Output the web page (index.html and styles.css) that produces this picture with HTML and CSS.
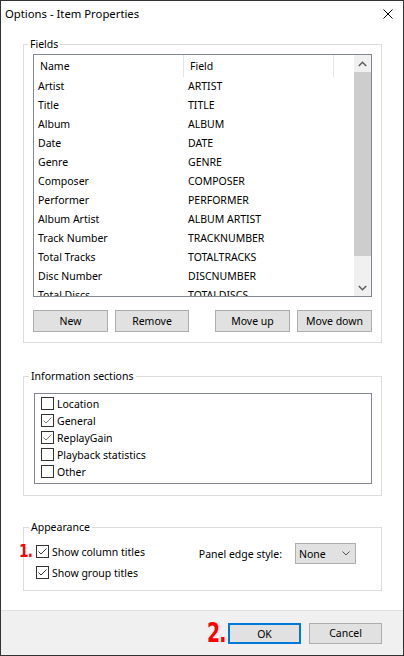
FILE: index.html
```html
<!DOCTYPE html>
<html>
<head>
<meta charset="utf-8">
<link rel="stylesheet" href="styles.css">
</head>
<body>
<div class="window">
  <div class="titlebar">
    <span class="title">Options - Item Properties</span>
    <svg class="close" width="10" height="10" viewBox="0 0 10 10"><path d="M0.5 0.5 L9.5 9.5 M9.5 0.5 L0.5 9.5" stroke="#000" stroke-width="1" fill="none"/></svg>
  </div>
  <div class="content">
    <fieldset class="group group-fields">
      <legend>Fields</legend>
      <div class="listview">
        <div class="lv-main">
          <div class="lv-header">
            <div class="hcell c1">Name</div>
            <div class="hcell c2">Field</div>
          </div>
          <div class="lv-rows">
            <div class="lv-row"><span class="cell c1">Artist</span><span class="cell c2">ARTIST</span></div>
            <div class="lv-row"><span class="cell c1">Title</span><span class="cell c2">TITLE</span></div>
            <div class="lv-row"><span class="cell c1">Album</span><span class="cell c2">ALBUM</span></div>
            <div class="lv-row"><span class="cell c1">Date</span><span class="cell c2">DATE</span></div>
            <div class="lv-row"><span class="cell c1">Genre</span><span class="cell c2">GENRE</span></div>
            <div class="lv-row"><span class="cell c1">Composer</span><span class="cell c2">COMPOSER</span></div>
            <div class="lv-row"><span class="cell c1">Performer</span><span class="cell c2">PERFORMER</span></div>
            <div class="lv-row"><span class="cell c1">Album Artist</span><span class="cell c2">ALBUM ARTIST</span></div>
            <div class="lv-row"><span class="cell c1">Track Number</span><span class="cell c2">TRACKNUMBER</span></div>
            <div class="lv-row"><span class="cell c1">Total Tracks</span><span class="cell c2">TOTALTRACKS</span></div>
            <div class="lv-row"><span class="cell c1">Disc Number</span><span class="cell c2">DISCNUMBER</span></div>
            <div class="lv-row"><span class="cell c1">Total Discs</span><span class="cell c2">TOTALDISCS</span></div>
          </div>
        </div>
        <div class="scrollbar">
          <div class="sb-btn"><svg width="9" height="6" viewBox="0 0 9 6"><path d="M0.8 5 L4.5 1.3 L8.2 5" stroke="#606060" stroke-width="1.6" fill="none"/></svg></div>
          <div class="sb-track"><div class="sb-thumb"></div></div>
          <div class="sb-btn"><svg width="9" height="6" viewBox="0 0 9 6"><path d="M0.8 1 L4.5 4.7 L8.2 1" stroke="#606060" stroke-width="1.6" fill="none"/></svg></div>
        </div>
      </div>
      <div class="btn-row">
        <button class="btn">New</button>
        <button class="btn">Remove</button>
        <span class="spacer"></span>
        <button class="btn">Move up</button>
        <button class="btn">Move down</button>
      </div>
    </fieldset>

    <fieldset class="group group-info">
      <legend>Information sections</legend>
      <div class="listbox">
        <div class="lb-item"><span class="chk"></span><span>Location</span></div>
        <div class="lb-item"><span class="chk"><svg width="11" height="11" viewBox="0 0 11 11"><path d="M1.5 5.5 L4 8 L9.5 2.5" stroke="#7a7a7a" stroke-width="1" fill="none"/></svg></span><span>General</span></div>
        <div class="lb-item"><span class="chk"><svg width="11" height="11" viewBox="0 0 11 11"><path d="M1.5 5.5 L4 8 L9.5 2.5" stroke="#7a7a7a" stroke-width="1" fill="none"/></svg></span><span>ReplayGain</span></div>
        <div class="lb-item"><span class="chk"></span><span>Playback statistics</span></div>
        <div class="lb-item"><span class="chk"></span><span>Other</span></div>
      </div>
    </fieldset>

    <fieldset class="group group-appear">
      <legend>Appearance</legend>
      <div class="appear-body">
        <div class="appear-checks">
          <div class="ck-row"><span class="mark mark1">1.</span><span class="chk"><svg width="11" height="11" viewBox="0 0 11 11"><path d="M1.5 5.5 L4 8 L9.5 2.5" stroke="#333" stroke-width="1" fill="none"/></svg></span><span>Show column titles</span></div>
          <div class="ck-row"><span class="chk"><svg width="11" height="11" viewBox="0 0 11 11"><path d="M1.5 5.5 L4 8 L9.5 2.5" stroke="#333" stroke-width="1" fill="none"/></svg></span><span>Show group titles</span></div>
        </div>
        <div class="edge">
          <span class="edge-label">Panel edge style:</span>
          <div class="combo"><span>None</span><svg width="8" height="5" viewBox="0 0 8 5"><path d="M0.5 0.5 L4 4 L7.5 0.5" stroke="#555" stroke-width="1" fill="none"/></svg></div>
        </div>
      </div>
    </fieldset>
  </div>
  <div class="footer">
    <div class="ok-wrap"><span class="mark mark2">2.</span><button class="btn btn-ok">OK</button></div>
    <button class="btn btn-cancel">Cancel</button>
  </div>
</div>
</body>
</html>
```

FILE: styles.css
```css
* { box-sizing: border-box; }
html, body { margin: 0; padding: 0; background: #fff; }
body {
  font-family: "Noto Sans", "Open Sans", sans-serif;
  font-size: 10.5px;
  color: #000;
}
.window {
  width: 404px;
  height: 656px;
  border: 1px solid #333;
  display: flex;
  flex-direction: column;
  background: #fff;
}
.titlebar {
  height: 30px;
  flex: none;
  display: flex;
  align-items: center;
  padding: 0 10px 5px 4px;
}
.title { font-size: 11.3px; line-height: 16px; }
.close { margin-left: auto; display: block; }

.content {
  flex: 1;
  padding: 5px 21px 0 22px;
}
.group {
  margin: 0;
  border: 1px solid #dcdcdc;
  min-width: 0;
}
.group legend {
  padding: 0 2px;
  line-height: 16px;
  font-size: 10.5px;
}
.group-fields { padding: 2px 9px 10px 9px; }
.group-fields legend { margin-left: -5px; }
.group-info { margin-top: 25px; padding: 9px 9px 11px 10px; }
.group-info legend { margin-left: -5px; }
.group-appear { margin-top: 23px; padding: 6px 0 7px 12px; }
.group-appear legend { margin-left: -7px; }

/* list view */
.listview {
  height: 243px;
  border: 1px solid #828790;
  display: flex;
}
.lv-main { flex: 1; overflow: hidden; }
.lv-header { display: flex; height: 22px; }
.hcell {
  line-height: 22px;
  padding-left: 6px;
  border-right: 1px solid #e5e5e5;
  height: 22px;
}
.hcell.c1, .cell.c1 { width: 150px; }
.hcell.c2, .cell.c2 { width: 150px; }
.lv-row { display: flex; height: 19px; line-height: 19px; }
.cell { padding-left: 4px; white-space: nowrap; }

.scrollbar {
  width: 17px;
  background: #f0f0f0;
  display: flex;
  flex-direction: column;
}
.sb-btn {
  height: 17px;
  display: flex;
  align-items: center;
  justify-content: center;
  flex: none;
}
.sb-track { flex: 1; }
.sb-thumb { height: 184px; background: #cdcdcd; }

.btn-row {
  display: flex;
  gap: 7px;
  margin-top: 13px;
}
.spacer { flex: 1; }
.btn {
  font-family: inherit;
  font-size: 10.5px;
  color: #000;
  background: #e1e1e1;
  border: 1px solid #adadad;
  height: 22px;
  width: 75px;
  padding: 0;
  margin: 0;
  line-height: 19px;
}
.btn-row .btn:nth-child(2) { width: 74px; }

/* list box with checks */
.listbox {
  height: 91px;
  border: 1px solid #828790;
  padding-top: 1px;
}
.lb-item {
  height: 17px;
  display: flex;
  align-items: center;
  padding-left: 6px;
  gap: 3px;
}
.chk {
  width: 13px;
  height: 13px;
  border: 1px solid #333;
  background: #fff;
  display: inline-flex;
  flex: none;
}
.chk svg { display: block; }

/* appearance */
.appear-body { display: flex; }
.appear-checks { display: flex; flex-direction: column; }
.ck-row {
  height: 21px;
  display: flex;
  align-items: center;
  gap: 3px;
  position: relative;
}
.edge {
  margin-left: auto;
  margin-right: 25px;
  margin-top: 2px;
  display: flex;
  align-items: center;
  height: 21px;
}
.edge-label { margin-right: 13px; }
.combo {
  width: 61px;
  height: 21px;
  background: #e1e1e1;
  border: 1px solid #adadad;
  display: flex;
  align-items: center;
  padding: 0 5px 0 3px;
  justify-content: space-between;
}

/* annotations */
.mark {
  position: absolute;
  color: #ff0000;
  font-family: "DejaVu Sans Condensed", "DejaVu Sans", sans-serif;
  font-weight: bold;
  letter-spacing: -1px;
}
.mark1 { font-size: 18px; line-height: 18px; left: -17px; top: 1px; transform: scaleX(0.85); transform-origin: left center; }
.mark2 { font-size: 26px; line-height: 26px; left: -21px; top: -3px; transform: scaleX(0.8); transform-origin: left center; }

/* footer */
.footer {
  height: 45px;
  flex: none;
  background: #f0f0f0;
  border-top: 1px solid #dfdfdf;
  display: flex;
  justify-content: flex-end;
  align-items: flex-start;
  padding: 12px 21px 0 0;
  gap: 8px;
}
.ok-wrap { position: relative; }
.footer .btn { width: 73px; height: 21px; }
.btn-ok { border: 2px solid #0078d7; }
```
